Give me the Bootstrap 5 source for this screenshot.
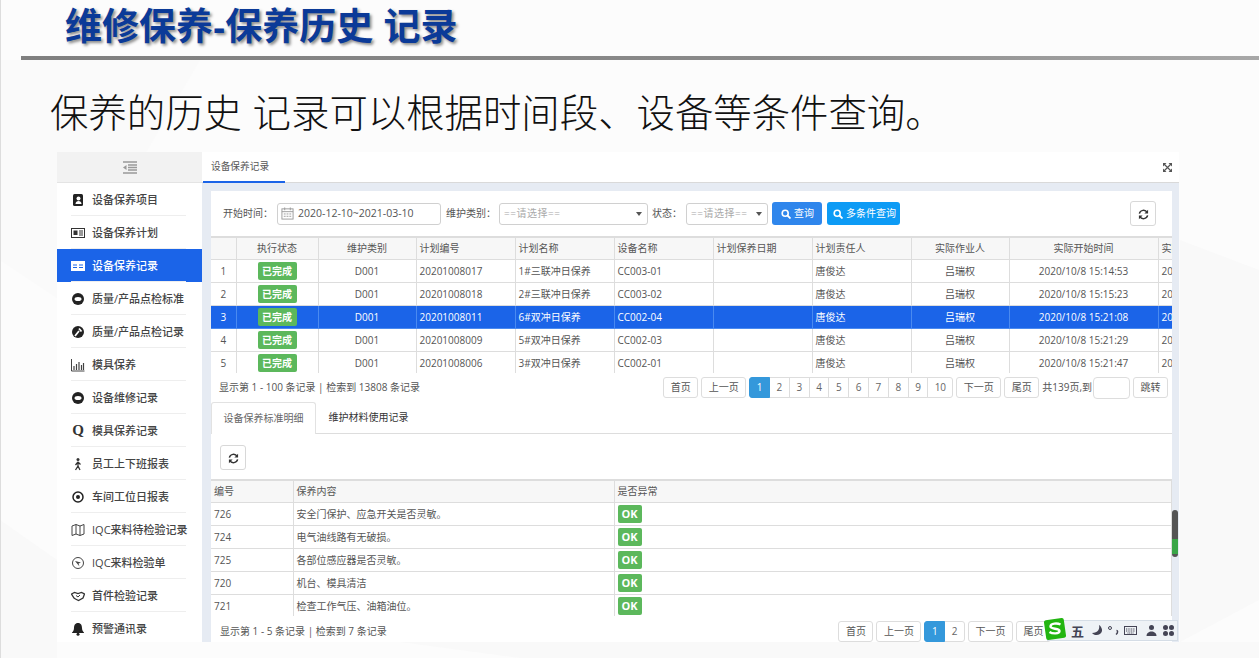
<!DOCTYPE html>
<html lang="zh-CN">
<head>
  <meta charset="UTF-8">
  <title>维修保养-保养历史记录</title>
  <meta name="viewport" content="width=device-width, initial-scale=1.0"/>
  <link href="https://cdn.jsdelivr.net/npm/bootstrap@5.3.0/dist/css/bootstrap.min.css" rel="stylesheet">
  <style>
    html, body { height: 100%; }
    body {
      background: #fcfcfc;
      font-family: "Open Sans", "Noto Sans CJK SC", sans-serif;
      font-size: 10px;
      color: #555;
      overflow: hidden;
      border-left: 1px solid #ddd;
    }
    .slide-bg { position: absolute; left: 0; top: 0; z-index: -1; }
    .slide-title {
      height: 56px;
      margin: 0;
      padding: 5px 0 0 64px;
      font-family: "Liberation Sans", "Noto Sans CJK SC", sans-serif;
      font-size: 37px;
      line-height: 46px;
      font-weight: 700;
      color: #0b3a98;
      text-shadow: 2px 2px 3px rgba(0,0,0,.45);
    }
    .slide-rule { height: 4px; margin-left: 20px; background: linear-gradient(to right, #7f7f7f, #8a8a8a 60%, #a8a8a8); }
    .slide-sub {
      height: 92px;
      margin: 0;
      padding: 28px 0 0 49px;
      font-family: "Liberation Sans", "Noto Sans CJK SC", sans-serif;
      font-size: 38.400px;
      line-height: 52px;
      font-weight: 300;
      color: #111;
    }
    .app-frame { width: 1122px; height: 490px; margin-left: 56px; background: #e6ebf3; overflow: hidden; }
    .side-col { width: 145px; background: #fff; flex: none; }
    .side-top { height: 31px; background: #f2f2f2; border-bottom: 1px solid #e4e4e4; }
    .side-item {
      height: 33px;
      padding-left: 14px;
      color: #444;
      font-size: 11px;
      font-weight: 500;
      line-height: 1;
      white-space: nowrap;
      position: relative;
    }
    .side-item:not(:last-child)::after { content: ""; position: absolute; left: 14px; width: 115px; bottom: 0; height: 1px; background: #eee; }
    .side-item svg { width: 14px; height: 14px; margin-right: 7px; flex: none; }
    .side-item.is-on { background: #1b64e8; color: #fff; }
    .side-q { width: 14px; margin-right: 7px; font-family: "Liberation Serif", serif; font-size: 15px; font-weight: 700; color: #333; text-align: center; }
    .main-col { min-width: 0; }
    .tab-strip { height: 31px; background: #fff; border-bottom: 1px solid #d9d9d9; flex: none; }
    .tab-on { width: 82px; height: 31px; margin-left: 1px; padding-left: 8px; border-bottom: 2px solid #1b64e8; font-size: 9.700px; line-height: 30px; color: #555; }
    .grow-x { margin: 0 7px 0 auto; width: 9px; height: 9px; }
    .work-card { width: 961px; height: 451px; margin: 8px 0 0 9px; background: #fff; }
    .tool-row { height: 45px; padding: 0 16px 0 12px; }
    .date-box { width: 164px; height: 22px; margin: 0 5px 0 0; border: 1px solid #d0d0d0; border-radius: 3px; padding-left: 3px; color: #555; font-size: 10.500px; }
    .date-box svg { width: 13px; height: 13px; margin-right: 4px; }
    .pick-box { height: 22px; margin-right: 4px; border: 1px solid #d0d0d0; border-radius: 3px; color: #aaa; padding: 0 5px 0 4px; letter-spacing: .5px; }
    .pick-box::after { content: ""; margin-left: auto; border: 3.500px solid transparent; border-top: 4px solid #555; border-bottom: 0; }
    .pick-a { width: 149px; }
    .pick-b { width: 82px; }
    .lbl-a { width: 54px; flex: none; }
    .lbl-a.lbl-tight { width: 53px; }
    .lbl-b { width: 34px; flex: none; }
    .find-btn { height: 23px; padding: 0 0 0 9px; border: 0; border-radius: 3px; color: #fff; font-size: 10px; white-space: nowrap; }
    .find-btn svg { width: 10px; height: 10px; margin-right: 3px; }
    .find-a { width: 50px; background: #2f86ec; }
    .find-b { width: 73px; margin-left: 5px; padding-left: 6px; background: #0d9bf5; }
    .reload-btn { width: 26px; height: 25px; padding: 0; border: 1px solid #d8d8d8; border-radius: 3px; background: #fff; }
    .reload-btn svg { width: 11px; height: 11px; }
    .clip-a { height: 137px; overflow: hidden; border-top: 1px solid #ddd; }
    .clip-b { height: 137px; overflow: hidden; border-top: 1px solid #ddd; }
    .data-grid { table-layout: fixed; margin: 0; color: #555; font-size: 10px; border-color: #ddd; }
    .data-grid > :not(caption) > * > * { padding: 0 3px; height: 23px; vertical-align: middle; color: #555; background: #fff; box-shadow: none; border-width: 0 1px 1px 0; border-color: #ddd; white-space: nowrap; overflow: hidden; }
    .data-grid thead th { background: #f7f7f7; font-weight: 400; height: 22px; }
    .data-grid > tbody > tr.row-on > * { background: #1b64e8; color: #fff; border-color: #4a8af0; }
    .grid-a { width: 1040px; }
    .grid-b { width: 961px; }
    .ctr { text-align: center; }
    .done-tag { display: inline-block; width: 39px; height: 18px; border-radius: 2px; background: #5cb85c; color: #fff; font-weight: 700; line-height: 18px; text-align: center; vertical-align: middle; }
    .ok-tag { display: inline-block; width: 24px; height: 18px; border-radius: 2px; background: #5cb85c; color: #fff; font-size: 11px; font-weight: 700; line-height: 18px; text-align: center; vertical-align: middle; }
    .pager-row { height: 29px; padding: 0 4px 0 8px; }
    .pager-set { gap: 3px; }
    .pg-btn { height: 21px; padding: 0 6.500px; border: 1px solid #ddd; border-radius: 3px; background: #fff; color: #555; line-height: 19px; font-size: 10px; text-decoration: none; white-space: nowrap; }
    .pg-nums { --bs-pagination-font-size: 10px; --bs-pagination-border-radius: 3px; margin: 0; }
    .pg-nums .page-link { width: 20.800px; height: 21px; padding: 0; line-height: 19px; text-align: center; color: #666; border-color: #ddd; }
    .pg-nums .page-item.active .page-link { background: #3498db; border-color: #3498db; color: #fff; }
    .pg-nums .pg-wide { width: 25.800px; }
    .pg-count { margin-right: -2px; white-space: nowrap; }
    .jump-box { width: 37px; height: 22px; border: 1px solid #ddd; border-radius: 4px; }
    .sub-tabs { height: 32px; border-bottom: 1px solid #ddd; }
    .sub-on { width: 105px; height: 32px; background: #fff; border: 1px solid #e2e2e2; border-bottom: 0; border-radius: 3px 3px 0 0; line-height: 31px; text-align: center; color: #666; }
    .sub-off { width: 105px; line-height: 31px; text-align: center; color: #333; }
    .sub-tool { height: 45px; padding: 11px 0 0 9px; }
    .tail-row { height: 26px; padding: 4px 0 0 9px; }
    .tail-pager { margin-right: 121px; }
    .scroll-thumb { position: absolute; left: 1172px; top: 510px; width: 6px; height: 47px; border-radius: 3px; background: linear-gradient(to bottom, #555 0, #555 62%, #3aa648 62%, #3aa648 94%, #555 94%); }
    .ime-bar { position: absolute; left: 1047px; top: 620px; width: 131px; height: 21px; background: #eef2f6; border: 1px solid #d5dde6; color: #445; font-weight: 700; font-size: 13px; }
    .ime-logo { position: absolute; left: 1043px; top: 617px; width: 24px; height: 24px; }
    .ime-bar svg { width: 13px; height: 13px; }
    .ime-wu { margin-left: 21px; width: 17px; text-align: center; font-family: "Noto Sans CJK SC", sans-serif; }
  </style>
</head>
<body>
  <svg class="slide-bg" width="1259" height="658" viewBox="0 0 1259 658">
    <polygon points="0,60 200,60 60,300 0,260" fill="#fafafa"/>
    <polygon points="1180,240 1259,270 1259,600 1180,642" fill="#f9f9f9"/>
    <polygon points="0,520 57,560 57,658 0,658" fill="#f9f9f9"/>
    <polygon points="400,642 1259,642 1259,658 520,658" fill="#f9f9f9"/>
  </svg>

  <h1 class="slide-title">维修保养-保养历史 记录</h1>
  <div class="slide-rule"></div>
  <h2 class="slide-sub">保养的历史 记录可以根据时间段、设备等条件查询。</h2>

  <div class="app-frame d-flex">
    <nav class="side-col">
      <div class="side-top d-flex align-items-center justify-content-center">
        <svg width="16" height="13" viewBox="0 0 16 13"><path d="M1 1h14M6 4h9M6 6.500h9M6 9h9M1 12h14" stroke="#999" stroke-width="1.300"/><path d="M4.500 4v5L1 6.500z" fill="#999"/></svg>
      </div>
      <div class="side-item d-flex align-items-center">
        <svg viewBox="0 0 14 14"><rect x="2" y="1" width="10" height="12" rx="1.500" fill="#222"/><circle cx="7.500" cy="5.500" r="2" fill="#fff"/><path d="M4.500 11c0-4 6-4 6 0z" fill="#fff"/></svg>设备保养项目
      </div>
      <div class="side-item d-flex align-items-center">
        <svg viewBox="0 0 14 14"><rect x=".5" y="2.500" width="13" height="9" fill="none" stroke="#333"/><rect x="2.500" y="4.500" width="4" height="4.500" fill="#333"/><path d="M8 5h4M8 7h4M8 9h4" stroke="#333"/></svg>设备保养计划
      </div>
      <div class="side-item is-on d-flex align-items-center">
        <svg viewBox="0 0 14 14"><rect y="2" width="14" height="10" fill="#fff"/><path d="M2 6h4M2 8.500h4M8 6h4M8 8.500h4" stroke="#1b64e8"/></svg>设备保养记录
      </div>
      <div class="side-item d-flex align-items-center">
        <svg viewBox="0 0 14 14"><circle cx="7" cy="7" r="6" fill="#222"/><ellipse cx="7" cy="7" rx="3.500" ry="2" fill="#fff"/></svg>质量/产品点检标准
      </div>
      <div class="side-item d-flex align-items-center">
        <svg viewBox="0 0 14 14"><circle cx="7" cy="7" r="6" fill="#222"/><path d="M4 11l4-5M8 3.500l2.500 3" stroke="#fff" stroke-width="1.800"/></svg>质量/产品点检记录
      </div>
      <div class="side-item d-flex align-items-center">
        <svg viewBox="0 0 14 14"><path d="M.5 1v12h13" fill="none" stroke="#444"/><path d="M3 12V8M5.500 12V6M8 12V4M10.500 12V7M12.500 12V5" stroke="#444" stroke-width="1.200"/></svg>模具保养
      </div>
      <div class="side-item d-flex align-items-center">
        <svg viewBox="0 0 14 14"><circle cx="7" cy="7" r="6" fill="#222"/><ellipse cx="7" cy="7" rx="3.500" ry="2" fill="#fff"/></svg>设备维修记录
      </div>
      <div class="side-item d-flex align-items-center">
        <span class="side-q">Q</span>模具保养记录
      </div>
      <div class="side-item d-flex align-items-center">
        <svg viewBox="0 0 14 14"><circle cx="7" cy="2.500" r="1.500" fill="#333"/><path d="M7 4.500v4.500L4.500 13M7 9l2 4M7 5L4.500 8M7 5l2.500 2.500" fill="none" stroke="#333" stroke-width="1.300"/></svg>员工上下班报表
      </div>
      <div class="side-item d-flex align-items-center">
        <svg viewBox="0 0 14 14"><circle cx="7" cy="7" r="5" fill="none" stroke="#222" stroke-width="1.500"/><circle cx="7" cy="7" r="2" fill="#222"/></svg>车间工位日报表
      </div>
      <div class="side-item d-flex align-items-center">
        <svg viewBox="0 0 14 14"><path d="M1 3l4-1.500 4 1.500 4-1.500v9.500l-4 1.500-4-1.500-4 1.500zM5 1.500V11M9 3v9.500" fill="none" stroke="#444"/></svg>IQC来料待检验记录
      </div>
      <div class="side-item d-flex align-items-center">
        <svg viewBox="0 0 14 14"><circle cx="7" cy="7" r="5.500" fill="none" stroke="#444"/><path d="M4 5l6 1.500-2.500 1 1 3z" fill="#444"/></svg>IQC来料检验单
      </div>
      <div class="side-item d-flex align-items-center">
        <svg viewBox="0 0 14 14"><path d="M.5 5l3-1.500 3.500 1 3.500-1 3 1.500-1.500 4-4.500 2.500-3-1.500-1.500-1z" fill="none" stroke="#333" stroke-width="1.300"/><path d="M5 6.500l2 1.500 2-2" fill="none" stroke="#333"/></svg>首件检验记录
      </div>
      <div class="side-item d-flex align-items-center">
        <svg viewBox="0 0 14 14"><path d="M7 1c-3 0-4 2.500-4 5 0 2.500-1 3.500-2 4.500v.5h12v-.5c-1-1-2-2-2-4.500 0-2.500-1-5-4-5z" fill="#222"/><circle cx="7" cy="12.300" r="1.500" fill="#222"/></svg>预警通讯录
      </div>
    </nav>

    <main class="main-col flex-grow-1 d-flex flex-column">
      <div class="tab-strip d-flex align-items-start">
        <div class="tab-on">设备保养记录</div>
        <svg class="grow-x align-self-center" viewBox="0 0 9 9"><path d="M0 0h3.500L0 3.500zM9 0v3.500L5.500 0zM0 9V5.500L3.500 9zM9 9H5.500L9 5.500z" fill="#555"/><path d="M1 1l7 7M8 1l-7 7" stroke="#555" stroke-width="1.200"/></svg>
      </div>

      <div class="work-card d-flex flex-column">
        <div class="tool-row d-flex align-items-center">
          <span class="lbl-a">开始时间：</span>
          <div class="date-box d-flex align-items-center">
            <svg viewBox="0 0 14 14"><rect x="1" y="2" width="12" height="11" fill="none" stroke="#999"/><path d="M1 5h12M4 .5v3M10 .5v3M3 7.500h2M6 7.500h2M9 7.500h2M3 10h2M6 10h2M9 10h2" stroke="#999"/></svg>2020-12-10~2021-03-10
          </div>
          <span class="lbl-a lbl-tight">维护类别：</span>
          <div class="pick-box pick-a d-flex align-items-center">==请选择==</div>
          <span class="lbl-b">状态：</span>
          <div class="pick-box pick-b d-flex align-items-center">==请选择==</div>
          <button class="find-btn find-a d-flex align-items-center" type="button">
            <svg viewBox="0 0 10 10"><circle cx="4.200" cy="4.200" r="3" fill="none" stroke="#fff" stroke-width="1.600"/><path d="M6.500 6.500L9.500 9.500" stroke="#fff" stroke-width="1.800"/></svg>查询
          </button>
          <button class="find-btn find-b d-flex align-items-center" type="button">
            <svg viewBox="0 0 10 10"><circle cx="4.200" cy="4.200" r="3" fill="none" stroke="#fff" stroke-width="1.600"/><path d="M6.500 6.500L9.500 9.500" stroke="#fff" stroke-width="1.800"/></svg>多条件查询
          </button>
          <button class="reload-btn ms-auto" type="button">
            <svg viewBox="0 0 12 12"><path d="M1.500 5A4.600 4.600 0 0 1 10 3.800M10.500 7A4.600 4.600 0 0 1 2 8.200" fill="none" stroke="#333" stroke-width="1.600"/><path d="M11 .8v4H7zM1 11.200v-4h4z" fill="#333"/></svg>
          </button>
        </div>

        <div class="clip-a">
          <table class="table table-bordered data-grid grid-a">
            <colgroup><col style="width:25px"><col style="width:82px"><col style="width:98px"><col style="width:99px"><col style="width:99px"><col style="width:99px"><col style="width:99px"><col style="width:99px"><col style="width:98px"><col style="width:149px"><col style="width:93px"></colgroup>
            <thead>
              <tr><th></th><th class="ctr">执行状态</th><th class="ctr">维护类别</th><th>计划编号</th><th>计划名称</th><th>设备名称</th><th>计划保养日期</th><th>计划责任人</th><th class="ctr">实际作业人</th><th class="ctr">实际开始时间</th><th>实际结束时间</th></tr>
            </thead>
            <tbody>
              <tr><td class="ctr">1</td><td class="ctr"><span class="done-tag">已完成</span></td><td class="ctr">D001</td><td>20201008017</td><td>1#三联冲日保养</td><td>CC003-01</td><td></td><td>唐俊达</td><td class="ctr">吕瑞权</td><td class="ctr">2020/10/8 15:14:53</td><td>2020/10/8</td></tr>
              <tr><td class="ctr">2</td><td class="ctr"><span class="done-tag">已完成</span></td><td class="ctr">D001</td><td>20201008018</td><td>2#三联冲日保养</td><td>CC003-02</td><td></td><td>唐俊达</td><td class="ctr">吕瑞权</td><td class="ctr">2020/10/8 15:15:23</td><td>2020/10/8</td></tr>
              <tr class="row-on"><td class="ctr">3</td><td class="ctr"><span class="done-tag">已完成</span></td><td class="ctr">D001</td><td>20201008011</td><td>6#双冲日保养</td><td>CC002-04</td><td></td><td>唐俊达</td><td class="ctr">吕瑞权</td><td class="ctr">2020/10/8 15:21:08</td><td>2020/10/8</td></tr>
              <tr><td class="ctr">4</td><td class="ctr"><span class="done-tag">已完成</span></td><td class="ctr">D001</td><td>20201008009</td><td>5#双冲日保养</td><td>CC002-03</td><td></td><td>唐俊达</td><td class="ctr">吕瑞权</td><td class="ctr">2020/10/8 15:21:29</td><td>2020/10/8</td></tr>
              <tr><td class="ctr">5</td><td class="ctr"><span class="done-tag">已完成</span></td><td class="ctr">D001</td><td>20201008006</td><td>3#双冲日保养</td><td>CC002-01</td><td></td><td>唐俊达</td><td class="ctr">吕瑞权</td><td class="ctr">2020/10/8 15:21:47</td><td>2020/10/8</td></tr>
            </tbody>
          </table>
        </div>

        <div class="pager-row d-flex align-items-center">
          <span>显示第 1 - 100 条记录 | 检索到 13808 条记录</span>
          <div class="ms-auto d-flex align-items-center pager-set">
            <a class="pg-btn">首页</a>
            <a class="pg-btn">上一页</a>
            <ul class="pagination pg-nums mb-0">
              <li class="page-item active"><a class="page-link">1</a></li>
              <li class="page-item"><a class="page-link">2</a></li>
              <li class="page-item"><a class="page-link">3</a></li>
              <li class="page-item"><a class="page-link">4</a></li>
              <li class="page-item"><a class="page-link">5</a></li>
              <li class="page-item"><a class="page-link">6</a></li>
              <li class="page-item"><a class="page-link">7</a></li>
              <li class="page-item"><a class="page-link">8</a></li>
              <li class="page-item"><a class="page-link">9</a></li>
              <li class="page-item"><a class="page-link pg-wide">10</a></li>
            </ul>
            <a class="pg-btn">下一页</a>
            <a class="pg-btn">尾页</a>
            <span class="pg-count">共139页,到</span>
            <div class="jump-box"></div>
            <a class="pg-btn">跳转</a>
          </div>
        </div>

        <div class="sub-tabs d-flex">
          <div class="sub-on">设备保养标准明细</div>
          <div class="sub-off">维护材料使用记录</div>
        </div>

        <div class="sub-tool">
          <button class="reload-btn" type="button">
            <svg viewBox="0 0 12 12"><path d="M1.500 5A4.600 4.600 0 0 1 10 3.800M10.500 7A4.600 4.600 0 0 1 2 8.200" fill="none" stroke="#333" stroke-width="1.600"/><path d="M11 .8v4H7zM1 11.200v-4h4z" fill="#333"/></svg>
          </button>
        </div>

        <div class="clip-b">
          <table class="table table-bordered data-grid grid-b">
            <colgroup><col style="width:82px"><col style="width:321px"><col></colgroup>
            <thead>
              <tr><th>编号</th><th>保养内容</th><th>是否异常</th></tr>
            </thead>
            <tbody>
              <tr><td>726</td><td>安全门保护、应急开关是否灵敏。</td><td><span class="ok-tag">OK</span></td></tr>
              <tr><td>724</td><td>电气油线路有无破损。</td><td><span class="ok-tag">OK</span></td></tr>
              <tr><td>725</td><td>各部位感应器是否灵敏。</td><td><span class="ok-tag">OK</span></td></tr>
              <tr><td>720</td><td>机台、模具清洁</td><td><span class="ok-tag">OK</span></td></tr>
              <tr><td>721</td><td>检查工作气压、油箱油位。</td><td><span class="ok-tag">OK</span></td></tr>
            </tbody>
          </table>
        </div>

        <div class="tail-row d-flex align-items-center">
          <span>显示第 1 - 5 条记录 | 检索到 7 条记录</span>
          <div class="ms-auto d-flex align-items-center pager-set tail-pager">
            <a class="pg-btn">首页</a>
            <a class="pg-btn">上一页</a>
            <ul class="pagination pg-nums mb-0">
              <li class="page-item active"><a class="page-link">1</a></li>
              <li class="page-item"><a class="page-link">2</a></li>
            </ul>
            <a class="pg-btn">下一页</a>
            <a class="pg-btn">尾页</a>
          </div>
        </div>
      </div>
    </main>
  </div>

  <div class="scroll-thumb"></div>

  <div class="ime-bar d-flex align-items-center gap-1">
    <span class="ime-wu">五</span>
    <svg viewBox="0 0 13 13"><path d="M9 1c1 4-1 8-7 8 2 3 9 3 10-2 .4-2-1-5-3-6z" fill="#445"/></svg>
    <svg viewBox="0 0 13 13"><circle cx="3" cy="4" r="1.500" fill="none" stroke="#445"/><path d="M9.500 6.500c1.500 0 1.500 2.500-.5 4" fill="none" stroke="#445" stroke-width="1.500"/></svg>
    <svg viewBox="0 0 13 13"><rect x=".5" y="2.500" width="12" height="8" fill="none" stroke="#445"/><path d="M2 5h9M2 7h9M3.500 9h6" stroke="#445" stroke-dasharray="1 .7"/></svg>
    <svg class="ms-1" viewBox="0 0 13 13"><circle cx="6.500" cy="3.500" r="2.500" fill="#445"/><path d="M1.500 12c0-6 10-6 10 0z" fill="#445"/></svg>
    <svg viewBox="0 0 13 13"><circle cx="3.500" cy="3.500" r="2.500" fill="#445"/><circle cx="9.500" cy="3.500" r="2.500" fill="#445"/><circle cx="3.500" cy="9.500" r="2.500" fill="#445"/><circle cx="9.500" cy="9.500" r="2.500" fill="#445"/></svg>
  </div>
  <svg class="ime-logo" viewBox="0 0 24 24"><rect x="2" y="2" width="20" height="20" rx="2" transform="rotate(-8 12 12)" fill="#22b511"/><path d="M17.500 7.500c-3-1.500-10-1.500-10 2 0 3 9 1.500 9 4.500s-7 3-10 1" fill="none" stroke="#fff" stroke-width="2.400"/></svg>

  <script src="https://cdn.jsdelivr.net/npm/bootstrap@5.3.0/dist/js/bootstrap.bundle.min.js"></script>
</body>
</html>
